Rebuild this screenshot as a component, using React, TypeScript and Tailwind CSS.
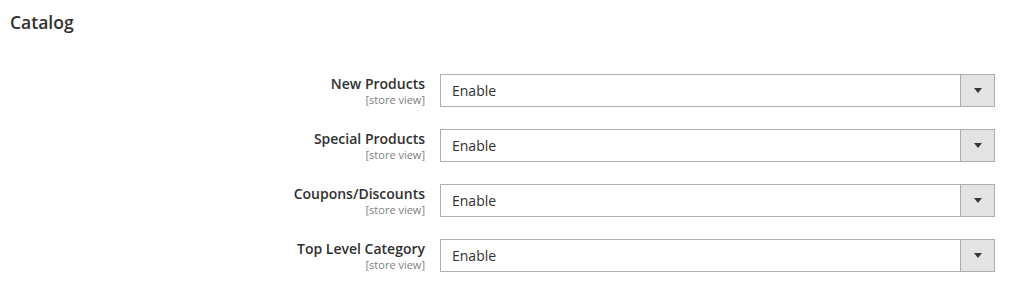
import React from "react";

const rows = ["New Products", "Special Products", "Coupons/Discounts", "Top Level Category"];

export default function App() {
  return (
    <div className="w-[1015px] h-[287px] bg-white overflow-hidden" style={{ fontFamily: '"Open Sans", sans-serif' }}>
      <div className="pl-[10px] pt-[11px] text-[17.5px] leading-[22px] font-semibold text-[#303030]">Catalog</div>
      <div className="mt-[41px] flex flex-col gap-[22px]">
        {rows.map((r) => (
          <div key={r} className="flex items-start h-[33px]">
            <div className="w-[440px] pr-[15px] pt-[1px] flex flex-col items-end">
              <span className="text-[14px] leading-[18px] font-semibold text-[#303030]">{r}</span>
              <span className="text-[11px] leading-[13px] text-[#808080]">[store view]</span>
            </div>
            <div className="w-[555px] h-[33px] border border-[#adadad] bg-white flex items-stretch">
              <div className="flex-1 pl-[11px] flex items-center text-[14px] text-[#303030]">Enable</div>
              <div className="w-[34px] bg-[#e3e3e3] border-l border-[#adadad] flex items-center justify-center">
                <svg width="8" height="5" viewBox="0 0 8 5"><path d="M0 0h8L4 5z" fill="#41362f" /></svg>
              </div>
            </div>
          </div>
        ))}
      </div>
    </div>
  );
}
